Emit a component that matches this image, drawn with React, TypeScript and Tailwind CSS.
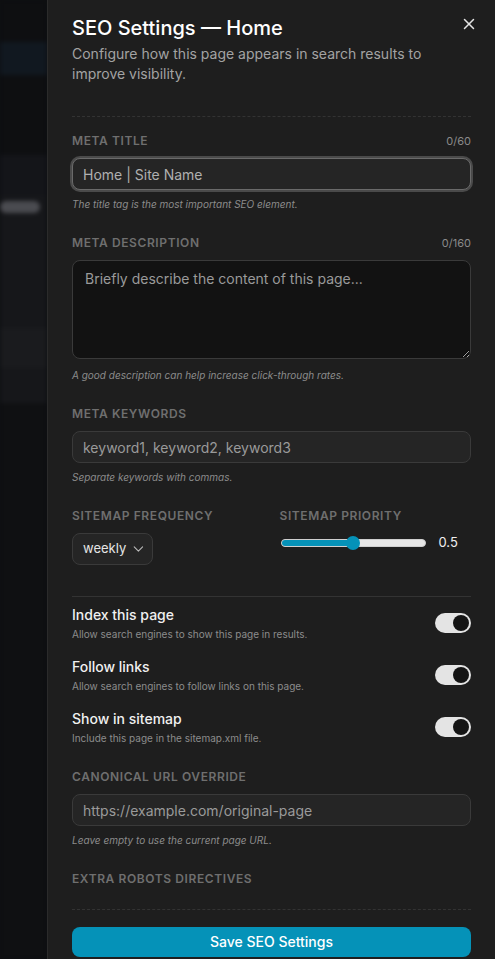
import { X, ChevronDown } from "lucide-react"

function Backdrop() {
  return (
    <div className="flex-1 flex flex-col blur-[2px] bg-[#0e0f11]">
      <div className="h-[42px]" />
      <div className="h-[33px] bg-[#111820]" />
      <div className="h-[80px]" />
      <div className="h-[40px] bg-[#141519]" />
      <div className="h-[23px] bg-[#16171a] flex items-center">
        <div className="h-[12px] w-[40px] rounded-full bg-[#4a4b50]" />
      </div>
      <div className="h-[110px] bg-[#16171a]" />
      <div className="h-[40px] bg-[#1a1b1e]" />
      <div className="h-[35px] bg-[#16171a]" />
      <div className="flex-1 bg-[#0f1012]" />
    </div>
  )
}

function FieldLabel({ label, counter }: { label: string; counter?: string }) {
  return (
    <div className="mb-[9px] flex h-4 items-center justify-between">
      <span className="text-xs font-semibold uppercase tracking-wider text-[#6f6f6f]">{label}</span>
      {counter && <span className="text-[11px] text-[#8a8a8a]">{counter}</span>}
    </div>
  )
}

function Help({ children, className = "mt-[7px]" }: { children: React.ReactNode; className?: string }) {
  return <p className={`${className} text-[10px] italic leading-[14px] text-[#8c8c8c]`}>{children}</p>
}

function Toggle() {
  return (
    <div className="flex h-5 w-9 shrink-0 items-center justify-end rounded-full bg-[#e4e4e4] px-[2px]">
      <div className="h-4 w-4 rounded-full bg-[#141414]" />
    </div>
  )
}

export default function App() {
  const toggles = [
    { title: "Index this page", description: "Allow search engines to show this page in results." },
    { title: "Follow links", description: "Allow search engines to follow links on this page." },
    { title: "Show in sitemap", description: "Include this page in the sitemap.xml file." },
  ]

  const inputClass =
    "block h-8 w-full rounded-lg border border-[#3a3a3a] bg-[#252525] px-[10px] text-sm text-[#d4d4d4] outline-none placeholder:text-[#9a9a9a]"

  return (
    <div className="flex h-[959px] overflow-hidden bg-[#0e0f11] font-['Inter',sans-serif]">
      <Backdrop />

      <aside className="relative w-[448px] shrink-0 border-l border-[#2b2b2b] bg-[#1e1e1e] px-6 pt-[14px]">
        <button className="absolute right-[17px] top-[15px] text-[#e5e5e5]">
          <X size={18} strokeWidth={2} />
        </button>

        {/* Header */}
        <h2 className="text-xl font-medium leading-7 text-white">SEO Settings — Home</h2>
        <p className="mt-0.5 max-w-[370px] text-sm leading-5 text-[#a3a3a3]">
          Configure how this page appears in search results to improve visibility.
        </p>

        <div className="mt-8 border-t border-dashed border-[#333333]" />

        {/* Form */}
        <div className="flex flex-col gap-6 pt-4">
          <div>
            <FieldLabel label="Meta title" counter="0/60" />
            <input
              className={`${inputClass} ring-2 ring-[#4a4a4a] border-[#6a6a6a] placeholder:text-[#b0b0b0]`}
              placeholder="Home | Site Name"
            />
            <Help>The title tag is the most important SEO element.</Help>
          </div>

          <div>
            <FieldLabel label="Meta description" counter="0/160" />
            <textarea
              className="block h-[99px] w-full rounded-lg border border-[#3a3a3a] bg-[#121212] px-3 py-2 text-sm text-[#d4d4d4] outline-none placeholder:text-[#9a9a9a]"
              placeholder="Briefly describe the content of this page..."
            />
            <Help className="mt-[9px]">A good description can help increase click-through rates.</Help>
          </div>

          <div>
            <FieldLabel label="Meta keywords" />
            <input className={inputClass} placeholder="keyword1, keyword2, keyword3" />
            <Help>Separate keywords with commas.</Help>
          </div>

          <div className="grid grid-cols-2 gap-4">
            <div>
              <FieldLabel label="Sitemap frequency" />
              <div className="flex h-8 w-[81px] items-center gap-1 rounded-lg border border-[#3a3a3a] bg-[#252525] pl-[10px] pr-[5px] text-[13px] text-[#e5e5e5]">
                weekly
                <ChevronDown size={20} strokeWidth={1.5} className="text-[#bdbdbd]" />
              </div>
            </div>
            <div>
              <FieldLabel label="Sitemap priority" />
              <div className="flex h-5 items-center gap-[13px] pl-px">
                <div className="relative h-2 w-[145px] rounded-full border border-[#cfcfcf] bg-[#e6e6e6]">
                  <div className="h-full w-1/2 rounded-full bg-[#0592b8]" />
                  <div className="absolute left-1/2 top-1/2 h-3.5 w-3.5 -translate-x-1/2 -translate-y-1/2 rounded-full bg-[#0592b8]" />
                </div>
                <span className="text-[13px] text-[#f0f0f0]">0.5</span>
              </div>
            </div>
          </div>

          <div className="mt-[7px] flex flex-col gap-4 border-t border-[#333333] pt-2">
            {toggles.map((toggle) => (
              <div key={toggle.title} className="flex h-9 items-center justify-between">
                <div>
                  <div className="text-sm font-medium leading-5 text-[#f0f0f0]">{toggle.title}</div>
                  <div className="mt-0.5 text-[10px] leading-[14px] text-[#8c8c8c]">{toggle.description}</div>
                </div>
                <Toggle />
              </div>
            ))}
          </div>

          <div>
            <FieldLabel label="Canonical URL override" />
            <input className={inputClass} placeholder="https://example.com/original-page" />
            <Help>Leave empty to use the current page URL.</Help>
          </div>

          <div>
            <FieldLabel label="Extra robots directives" />
          </div>
        </div>

        {/* Footer */}
        <div className="mt-[13px] border-t border-dashed border-[#333333] pt-[17px]">
          <button className="h-[30px] w-full rounded-lg bg-[#0592b8] text-sm font-medium text-white">
            Save SEO Settings
          </button>
        </div>
      </aside>
    </div>
  )
}
